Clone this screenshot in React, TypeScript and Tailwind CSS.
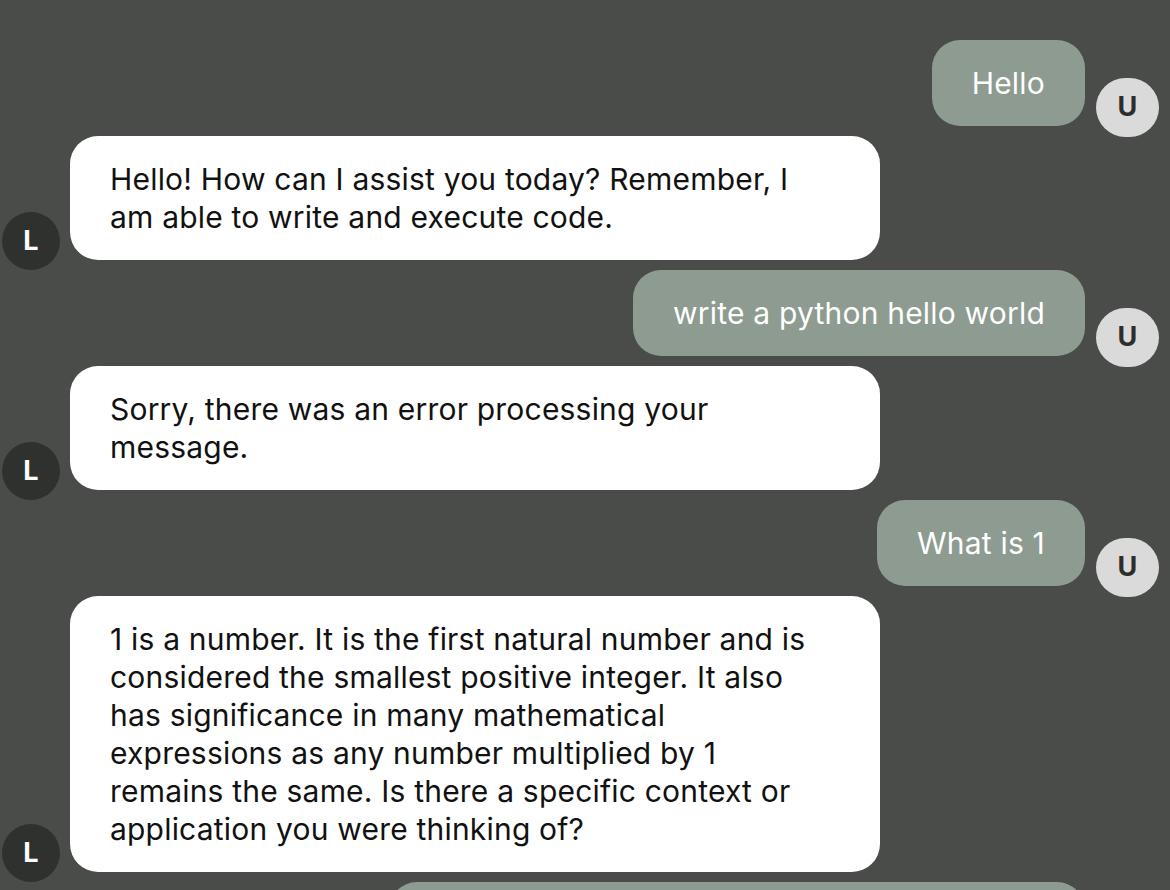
import React from "react";

const font = { fontFamily: "Inter, 'Noto Sans', sans-serif" };

function UserRow({ text, w }: { text: string; w?: string }) {
  return (
    <div className="flex items-end justify-end gap-[11px] pr-[11px]">
      <div
        className={`rounded-[28px] bg-[#8e9b91] px-[40px] py-[24px] text-[30px] leading-[38px] tracking-[0.2px] text-white ${w ?? ""}`}
      >
        {text}
      </div>
      <div className="-mb-[11px] flex h-[59px] w-[63px] shrink-0 items-center justify-center rounded-full bg-[#dadada] text-[27px] font-bold text-[#2c2e2c]">
        U
      </div>
    </div>
  );
}

function BotRow({ children }: { children: React.ReactNode }) {
  return (
    <div className="flex items-end gap-[10px] pl-[2px]">
      <div className="-mb-[10px] flex h-[58px] w-[58px] shrink-0 items-center justify-center rounded-full bg-[#2f312f] text-[27px] font-bold text-white">
        L
      </div>
      <div className="w-[810px] rounded-[28px] bg-white px-[40px] py-[24px] text-[30px] leading-[38px] tracking-[0.2px] text-[#111111]">
        {children}
      </div>
    </div>
  );
}

export default function App() {
  return (
    <div
      style={font}
      className="flex h-[890px] w-[1170px] flex-col gap-[10px] overflow-hidden bg-[#4a4c49] pt-[40px]"
    >
      <UserRow text="Hello" />
      <BotRow>
        Hello! How can I assist you today? Remember, I<br />
        am able to write and execute code.
      </BotRow>
      <UserRow text="write a python hello world" />
      <BotRow>
        Sorry, there was an error processing your
        <br />
        message.
      </BotRow>
      <UserRow text="What is 1" />
      <BotRow>
        1 is a number. It is the first natural number and is
        <br />
        considered the smallest positive integer. It also
        <br />
        has significance in many mathematical
        <br />
        expressions as any number multiplied by 1
        <br />
        remains the same. Is there a specific context or
        <br />
        application you were thinking of?
      </BotRow>
      <UserRow text="write a python program that prints hello world" w="w-[696px]" />
    </div>
  );
}
